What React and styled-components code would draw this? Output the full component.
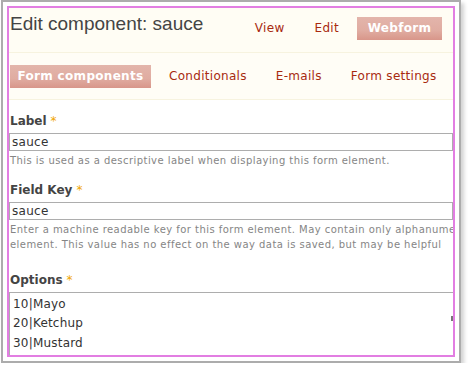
import React from 'react'
import styled, { createGlobalStyle } from 'styled-components'

const GlobalStyle = createGlobalStyle`
  * { box-sizing: border-box; }
  body {
    margin: 0;
    background: #ffffff;
    font-family: "DejaVu Sans", Verdana, sans-serif;
  }
`

const Frame = styled.div`
  margin: 0 0 0 1px;
  width: 460px;
  height: 363px;
  border: 2px solid #acacac;
  padding: 4px;
  background: #ffffff;
  box-shadow: 3px 3px 4px rgba(0, 0, 0, 0.18);
  display: flex;
`

const Panel = styled.div`
  flex: 1;
  border: 2px solid #e27ee2;
  overflow: hidden;
  display: flex;
  flex-direction: column;
  background: #ffffff;

  & > * {
    flex-shrink: 0;
  }
`

const Header = styled.div`
  display: flex;
  justify-content: space-between;
  align-items: flex-start;
  height: 45px;
  background: #fffdf4;
  border-bottom: 1px solid #f7f3df;
  padding: 0 11px 0 1px;
`

const Title = styled.h1`
  margin: 4px 0 0;
  font-family: "Liberation Sans", Arial, sans-serif;
  font-weight: normal;
  font-size: 19px;
  line-height: 24px;
  color: #444444;
`

const TabList = styled.div`
  display: flex;
  align-items: center;
  margin-top: ${p => p.top}px;
`

const Tab = styled.span`
  font-size: 12px;
  line-height: 23px;
  color: ${p => (p.active ? '#ffffff' : '#a82a10')};
  font-weight: ${p => (p.active ? 'bold' : 'normal')};
  margin-left: ${p => p.gap || 0}px;
  background: ${p =>
    p.active ? 'linear-gradient(#e3b5ab, #e0aca1 60%, #d8968a)' : 'none'};
  width: ${p => (p.w ? p.w + 'px' : 'auto')};
  text-align: center;
  letter-spacing: 0.3px;
`

const TabRow = styled.div`
  height: 47px;
  background: #fffdf6;
  border-bottom: 1px solid #f7f3df;
  padding: 0 1px;
`

const Field = styled.div`
  margin-top: ${p => p.top}px;
`

const Label = styled.div`
  font-size: 12px;
  line-height: 15px;
  font-weight: bold;
  color: #444444;
  padding-left: 1px;
`

const Required = styled.span`
  color: #f0a500;
  font-weight: normal;
  margin-left: 4px;
`

const Input = styled.div`
  margin-top: 4px;
  height: 18px;
  border: 1px solid #adadad;
  font-size: 12px;
  line-height: 16px;
  color: #333333;
  padding-left: 2px;
  letter-spacing: 0.3px;
`

const Description = styled.div`
  margin-top: 2px;
  font-size: 10px;
  line-height: 15.5px;
  color: #858585;
  padding-left: 1px;
  white-space: nowrap;
  letter-spacing: 0.45px;
`

const Textarea = styled.div`
  margin-top: 4px;
  border-top: 1px solid #adadad;
  border-left: 1px solid #adadad;
  padding: 2px 0 0 3px;
  height: 80px;
  position: relative;
`

const Line = styled.div`
  font-size: 12px;
  line-height: 19.5px;
  color: #333333;
  letter-spacing: 0.2px;
`

const Grip = styled.span`
  position: absolute;
  right: 0;
  top: 23px;
  width: 2px;
  height: 5px;
  background: #777777;
`

export default function App() {
  return (
    <>
      <GlobalStyle />
      <Frame>
        <Panel>
          <Header>
            <Title>Edit component: sauce</Title>
            <TabList top={9}>
              <Tab>View</Tab>
              <Tab gap={30}>Edit</Tab>
              <Tab active gap={18} w={85}>Webform</Tab>
            </TabList>
          </Header>
          <TabRow>
            <TabList top={12}>
              <Tab active w={141}>Form components</Tab>
              <Tab gap={18}>Conditionals</Tab>
              <Tab gap={29}>E-mails</Tab>
              <Tab gap={29}>Form settings</Tab>
            </TabList>
          </TabRow>
          <Field top={14}>
            <Label>
              Label<Required>*</Required>
            </Label>
            <Input>sauce</Input>
            <Description>
              This is used as a descriptive label when displaying this form element.
            </Description>
          </Field>
          <Field top={14}>
            <Label>
              Field Key<Required>*</Required>
            </Label>
            <Input>sauce</Input>
            <Description>
              Enter a machine readable key for this form element. May contain only alphanumeric
              <br />
              element. This value has no effect on the way data is saved, but may be helpful
            </Description>
          </Field>
          <Field top={20}>
            <Label>
              Options<Required>*</Required>
            </Label>
            <Textarea>
              <Line>10|Mayo</Line>
              <Line>20|Ketchup</Line>
              <Line>30|Mustard</Line>
              <Grip />
            </Textarea>
          </Field>
        </Panel>
      </Frame>
    </>
  )
}
